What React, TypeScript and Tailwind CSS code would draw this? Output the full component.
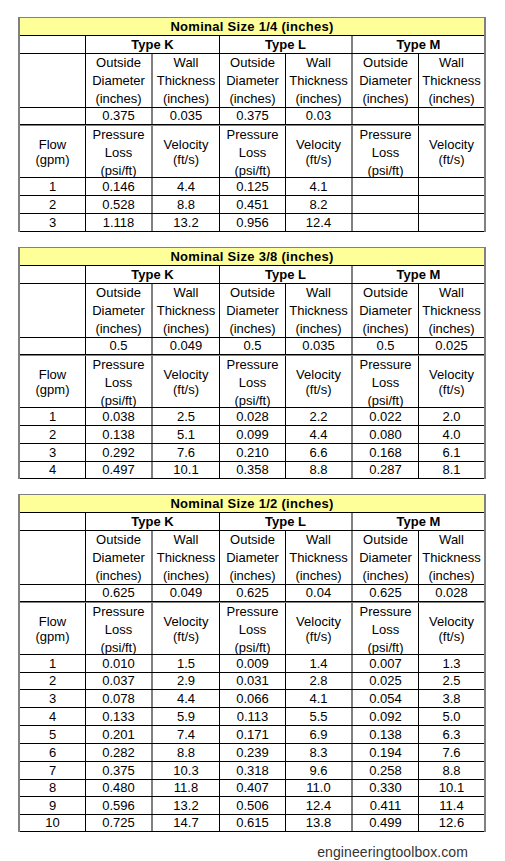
import React from 'react'

type Table = {
  size: string
  dims: string[]
  rows: string[][]
  heights: string[]
}

// column widths + right-hand rule, shared by every row of the grid
const cols = [
  'w-[66px] border-r border-black',
  'w-[67px] border-r-2 border-[#808080]',
  'w-[67px] border-r border-black',
  'w-[66px] border-r border-black',
  'w-[67px] border-r-2 border-[#808080]',
  'w-[66px] border-r border-black',
  'w-[65px]',
]

const types = [
  { name: 'Type K', cls: 'w-[134px] border-r border-black' },
  { name: 'Type L', cls: 'w-[133px] border-r-2 border-[#808080]' },
  { name: 'Type M', cls: 'w-[131px]' },
]

const tables: Table[] = [
  {
    size: '1/4',
    dims: ['0.375', '0.035', '0.375', '0.03', '', ''],
    rows: [
      ['1', '0.146', '4.4', '0.125', '4.1', '', ''],
      ['2', '0.528', '8.8', '0.451', '8.2', '', ''],
      ['3', '1.118', '13.2', '0.956', '12.4', '', ''],
    ],
    heights: ['h-[18px]', 'h-[18px]', 'h-[18px]'],
  },
  {
    size: '3/8',
    dims: ['0.5', '0.049', '0.5', '0.035', '0.5', '0.025'],
    rows: [
      ['1', '0.038', '2.5', '0.028', '2.2', '0.022', '2.0'],
      ['2', '0.138', '5.1', '0.099', '4.4', '0.080', '4.0'],
      ['3', '0.292', '7.6', '0.210', '6.6', '0.168', '6.1'],
      ['4', '0.497', '10.1', '0.358', '8.8', '0.287', '8.1'],
    ],
    heights: ['h-[18px]', 'h-[18px]', 'h-[18px]', 'h-[17px]'],
  },
  {
    size: '1/2',
    dims: ['0.625', '0.049', '0.625', '0.04', '0.625', '0.028'],
    rows: [
      ['1', '0.010', '1.5', '0.009', '1.4', '0.007', '1.3'],
      ['2', '0.037', '2.9', '0.031', '2.8', '0.025', '2.5'],
      ['3', '0.078', '4.4', '0.066', '4.1', '0.054', '3.8'],
      ['4', '0.133', '5.9', '0.113', '5.5', '0.092', '5.0'],
      ['5', '0.201', '7.4', '0.171', '6.9', '0.138', '6.3'],
      ['6', '0.282', '8.8', '0.239', '8.3', '0.194', '7.6'],
      ['7', '0.375', '10.3', '0.318', '9.6', '0.258', '8.8'],
      ['8', '0.480', '11.8', '0.407', '11.0', '0.330', '10.1'],
      ['9', '0.596', '13.2', '0.506', '12.4', '0.411', '11.4'],
      ['10', '0.725', '14.7', '0.615', '13.8', '0.499', '12.6'],
    ],
    heights: ['h-[18px]', 'h-[17px]', 'h-[18px]', 'h-[18px]', 'h-[18px]', 'h-[18px]', 'h-[18px]', 'h-[17px]', 'h-[18px]', 'h-[17px]'],
  },
]

const cell = 'shrink-0 flex flex-col items-center justify-center text-center'

const PipeTable = ({ t, first }: { t: Table; first?: boolean }) => {
  return (
    <div
      className={
        'ml-[18px] w-[468px] border-t border-l-2 border-r-2 border-[#808080] ' +
        (first ? 'mt-[17px]' : 'mt-[15px]')
      }
    >
      <div className="flex h-[18px] items-center justify-center border-b border-black bg-[#ffff99] font-bold tracking-[0.28px]">
        Nominal Size {t.size} (inches)
      </div>

      <div className="flex h-[18px] border-b border-black font-bold">
        <div className={cell + ' ' + cols[0]}></div>
        {types.map((ty) => (
          <div key={ty.name} className={cell + ' ' + ty.cls}>
            {ty.name}
          </div>
        ))}
      </div>

      <div className="flex h-[54px] border-b border-black leading-[18px]">
        <div className={cell + ' ' + cols[0]}></div>
        {[0, 1, 2].map((i) => (
          <React.Fragment key={i}>
            <div className={'shrink-0 flex flex-col items-center text-center ' + cols[1 + i * 2]}>
              <span>Outside</span>
              <span>Diameter</span>
              <span>(inches)</span>
            </div>
            <div className={'shrink-0 flex flex-col items-center text-center ' + cols[2 + i * 2]}>
              <span>Wall</span>
              <span>Thickness</span>
              <span>(inches)</span>
            </div>
          </React.Fragment>
        ))}
      </div>

      <div className="flex h-[17px] border-b border-black">
        <div className={cell + ' ' + cols[0]}></div>
        {t.dims.map((d, i) => (
          <div key={i} className={cell + ' ' + cols[i + 1]}>
            {d}
          </div>
        ))}
      </div>

      <div className="flex h-[53px] border-t border-t-[#808080] border-b border-black">
        <div className={cell + ' leading-[15px] ' + cols[0]}>
          <span>Flow</span>
          <span>(gpm)</span>
        </div>
        {[0, 1, 2].map((i) => (
          <React.Fragment key={i}>
            <div className={'shrink-0 flex flex-col items-center text-center leading-[18px] ' + cols[1 + i * 2]}>
              <span>Pressure</span>
              <span>Loss</span>
              <span>(psi/ft)</span>
            </div>
            <div className={cell + ' leading-[15px] ' + cols[2 + i * 2]}>
              <span>Velocity</span>
              <span>(ft/s)</span>
            </div>
          </React.Fragment>
        ))}
      </div>

      {t.rows.map((r, ri) => (
        <div key={ri} className={'flex border-b border-black ' + t.heights[ri]}>
          {r.map((v, ci) => (
            <div key={ci} className={cell + ' ' + cols[ci]}>
              {v}
            </div>
          ))}
        </div>
      ))}
    </div>
  )
}

const App = () => {
  return (
    <div className="w-[505px] min-h-[861px] bg-white text-[13px] leading-[18px] text-black font-['Liberation_Sans',Arial,sans-serif]">
      {tables.map((t, i) => (
        <PipeTable key={t.size} t={t} first={i === 0} />
      ))}
      <div className="mt-3 pr-[37px] text-right text-[14px] leading-[16px] text-[#333] tracking-[0.1px]">
        engineeringtoolbox.com
      </div>
    </div>
  )
}

export default App
